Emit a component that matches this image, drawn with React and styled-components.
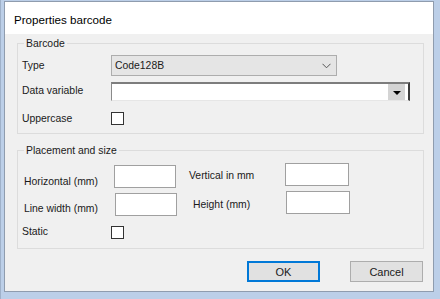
import React from "react";
import styled, { createGlobalStyle } from "styled-components";

const GlobalStyle = createGlobalStyle`
  html, body {
    margin: 0;
    padding: 0;
    background: #ffffff;
  }
  body {
    font-family: "Liberation Sans", Arial, sans-serif;
    font-size: 10.4px;
    color: #1a1a1a;
  }
`;

const Frame = styled.div`
  width: 440px;
  height: 299px;
  box-sizing: border-box;
  padding: 1px 6px 7px 3px;
  background: #bccfe8;
  border-left: 1px solid #9fb1c9;
  display: flex;
`;

const Window = styled.div`
  flex: 1;
  box-sizing: border-box;
  border: 1px solid #8f9cae;
  background: #f0f0f0;
  display: flex;
  flex-direction: column;
`;

const TitleBar = styled.div`
  height: 32px;
  background: #ffffff;
  display: flex;
  align-items: center;
  padding-left: 9px;
  padding-top: 2px;
  box-sizing: border-box;
  font-size: 11.6px;
  color: #000000;
`;

const Group = styled.fieldset`
  margin: ${(p) => p.$mt}px 9px 0 12px;
  padding: 0 0 ${(p) => p.$pb}px 0;
  border: 1px solid #dcdcdc;
  min-width: 0;
`;

const Legend = styled.legend`
  line-height: 13px;
  padding: 0 2px;
  margin-left: 6px;
`;

const FormRow = styled.div`
  display: flex;
  align-items: ${(p) => (p.$top ? "flex-start" : "center")};
  height: ${(p) => p.$h}px;
  margin-top: ${(p) => p.$mt || 0}px;
  padding-left: ${(p) => p.$pl || 0}px;
`;

const Label = styled.div`
  width: ${(p) => p.$w}px;
  margin-top: ${(p) => p.$mt || 0}px;
  margin-left: ${(p) => p.$ml || 0}px;
  line-height: 13px;
  white-space: nowrap;
  flex: none;
`;

const Combo = styled.div`
  width: 226px;
  height: 21px;
  box-sizing: border-box;
  background: #e5e5e5;
  border: 1px solid #adadad;
  display: flex;
  align-items: center;
  justify-content: space-between;
  padding: 0 5px 0 3px;
`;

const DataInput = styled.div`
  width: 299px;
  height: 19px;
  box-sizing: border-box;
  background: #ffffff;
  border-top: 2px solid #7d7d7d;
  border-left: 1px solid #8a8a8a;
  border-right: 2px solid #3c3c3c;
  border-bottom: 1px solid #e6e6e6;
  display: flex;
  justify-content: flex-end;
  padding-right: 3px;
`;

const DropButton = styled.div`
  width: 17px;
  background: #d4d4d4;
  display: flex;
  align-items: center;
  justify-content: center;
`;

const Arrow = styled.div`
  width: 0;
  height: 0;
  border-left: 4px solid transparent;
  border-right: 4px solid transparent;
  border-top: 4px solid #000000;
  margin-top: 1px;
`;

const CheckBox = styled.div`
  width: 13px;
  height: 13px;
  box-sizing: border-box;
  border: 1px solid #333333;
  background: #ffffff;
  margin-top: ${(p) => p.$mt || 0}px;
  flex: none;
`;

const TextBox = styled.div`
  width: ${(p) => p.$w}px;
  height: 23px;
  box-sizing: border-box;
  border: 1px solid #a0a0a0;
  background: #ffffff;
  margin-top: ${(p) => p.$mt || 0}px;
  flex: none;
`;

const ButtonBar = styled.div`
  display: flex;
  justify-content: flex-end;
  gap: 30px;
  margin-top: 12px;
  padding-right: 10px;
`;

const Button = styled.div`
  width: 73px;
  height: 21px;
  box-sizing: border-box;
  background: #e1e1e1;
  border: ${(p) => (p.$primary ? "2px solid #0078d7" : "1px solid #adadad")};
  display: flex;
  align-items: center;
  justify-content: center;
  font-size: 11px;
`;

const Chevron = () => (
  <svg width="9" height="6" viewBox="0 0 9 6">
    <polyline points="0.5,0.8 4.5,4.8 8.5,0.8" fill="none" stroke="#555" strokeWidth="1" />
  </svg>
);

export default function App() {
  return (
    <>
      <GlobalStyle />
      <Frame>
        <Window>
          <TitleBar>Properties barcode</TitleBar>

          <Group $mt={3} $pb={8}>
            <Legend>Barcode</Legend>
            <FormRow $h={21} $mt={5} $pl={4}>
              <Label $w={89}>Type</Label>
              <Combo>
                <span>Code128B</span>
                <Chevron />
              </Combo>
            </FormRow>
            <FormRow $h={19} $mt={6} $pl={4}>
              <Label $w={89} $mt={-2}>Data variable</Label>
              <DataInput>
                <DropButton>
                  <Arrow />
                </DropButton>
              </DataInput>
            </FormRow>
            <FormRow $h={13} $mt={11} $pl={4}>
              <Label $w={89}>Uppercase</Label>
              <CheckBox />
            </FormRow>
          </Group>

          <Group $mt={10} $pb={9}>
            <Legend>Placement and size</Legend>
            <FormRow $h={33} $top $pl={6}>
              <Label $w={90} $mt={18}>Horizontal (mm)</Label>
              <TextBox $w={62} $mt={8} />
              <Label $w={96} $mt={12} $ml={13}>Vertical in mm</Label>
              <TextBox $w={64} $mt={6} />
            </FormRow>
            <FormRow $h={29} $top $pl={6}>
              <Label $w={91} $mt={12}>Line width (mm)</Label>
              <TextBox $w={62} $mt={3} />
              <Label $w={93} $mt={8} $ml={16}>Height (mm)</Label>
              <TextBox $w={64} $mt={1} />
            </FormRow>
            <FormRow $h={20} $top $pl={4}>
              <Label $w={89} $mt={6}>Static</Label>
              <CheckBox $mt={7} />
            </FormRow>
          </Group>

          <ButtonBar>
            <Button $primary>OK</Button>
            <Button>Cancel</Button>
          </ButtonBar>
        </Window>
      </Frame>
    </>
  );
}
